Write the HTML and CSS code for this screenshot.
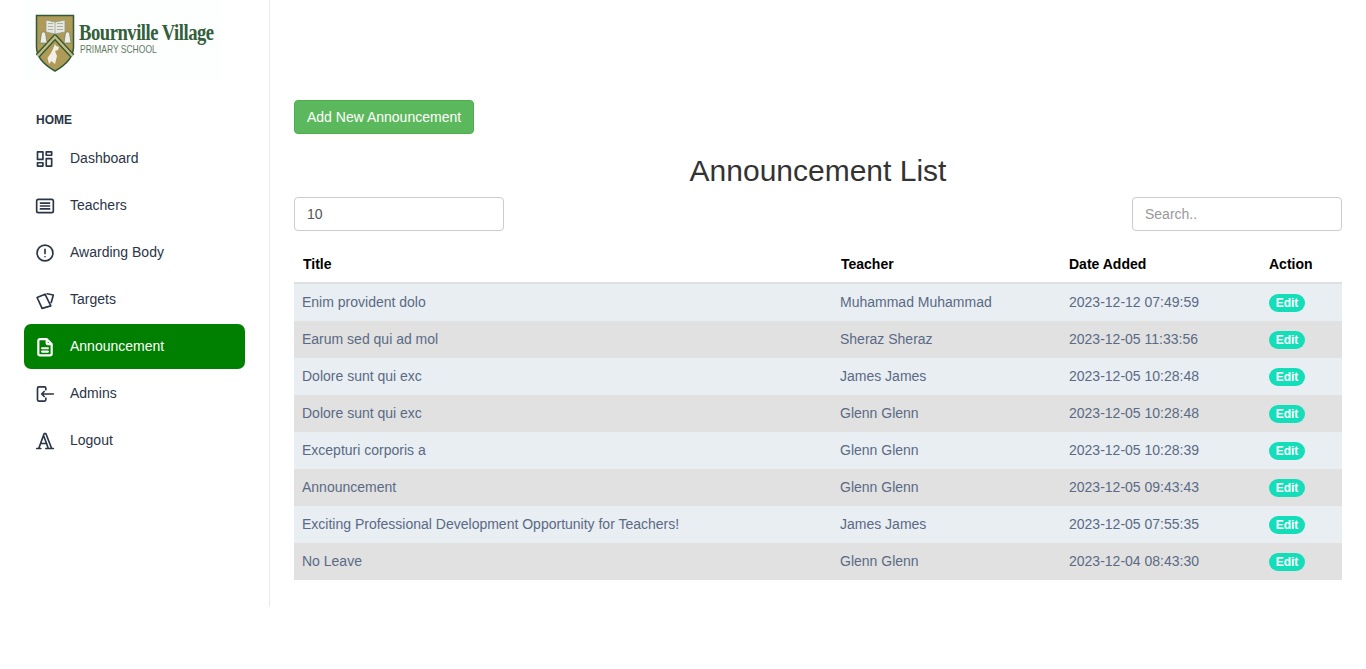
FILE: index.html
```html
<!DOCTYPE html>
<html lang="en">
<head>
<meta charset="utf-8">
<title>Announcement List</title>
<link rel="stylesheet" href="styles.css">
</head>
<body>
<div class="shell">
  <aside class="sidebar">
    <div class="logo">
      <svg class="crest" viewBox="0 0 40 58" width="40" height="58" aria-hidden="true">
        <path d="M1.500 1.500H38.500V33C38.500 45 29 52 20 57C11 52 1.500 45 1.500 33Z" fill="#b09a58" stroke="#2f5a35" stroke-width="1.500"/>
        <path d="M2.500 42L20 23L37.500 42" fill="none" stroke="#2f5a35" stroke-width="5"/>
        <path d="M2.500 42L20 23L37.500 42" fill="none" stroke="#c6ba80" stroke-width="2.400"/>
        <path d="M20 30L21 32L24 33L23 36L20 37L22 42L20 50L16.500 47L14 50L12.500 44L16 39L18 35Z" fill="#f1efe6"/>
        <path d="M11 6L20 8L30 6V18L20 20L11 18Z" fill="#e6e8e0" stroke="#8f9a85" stroke-width=".8"/>
        <path d="M20 8V20M13 9.500H18M13 12.500H18M13 15.500H18M22 9.500H28M22 12.500H28M22 15.500H28" stroke="#9aa593" stroke-width=".8" fill="none"/>
        <path d="M6.500 19C8 17.500 9.500 17.500 10.500 19L12 29H5Z" fill="#eceee6" stroke="#5d6f58" stroke-width=".6"/>
        <path d="M30.500 19C32 17.500 33.500 17.500 34.500 19L36 29H29Z" fill="#eceee6" stroke="#5d6f58" stroke-width=".6"/>
      </svg>
      <div class="logo-text">
        <div class="logo-name">Bournville Village</div>
        <div class="logo-sub">PRIMARY SCHOOL</div>
      </div>
    </div>
    <div class="nav-heading">HOME</div>
    <nav class="nav">
      <a class="nav-item">
        <svg class="icon" viewBox="0 0 24 24"><path d="M3 3.500h6.500v9H3zM3 16.500h6.500v4H3zM13.500 11.500H20v9h-6.500zM13.500 3.500H20v4h-6.500z"/></svg>
        <span>Dashboard</span>
      </a>
      <a class="nav-item">
        <svg class="icon" viewBox="0 0 24 24"><path d="M4 4h16a2 2 0 0 1 2 2v12a2 2 0 0 1-2 2H4a2 2 0 0 1-2-2V6a2 2 0 0 1 2-2M6.500 8.500h11M6.500 12h11M6.500 15.500h11"/></svg>
        <span>Teachers</span>
      </a>
      <a class="nav-item">
        <svg class="icon" viewBox="0 0 24 24"><path d="M12 2.500a9.500 9.500 0 1 0 0 19a9.500 9.500 0 0 0 0-19M12 7.500v5M12 16.500v.01"/></svg>
        <span>Awarding Body</span>
      </a>
      <a class="nav-item">
        <svg class="icon" viewBox="0 0 24 24"><path d="M2.500 9L12 5L19 19L8.500 22ZM14.500 4.500L22 6L19.500 15"/></svg>
        <span>Targets</span>
      </a>
      <a class="nav-item active">
        <svg class="icon icon-bold" viewBox="0 0 24 24"><path d="M14 2.500v5a1 1 0 0 0 1 1h5M18 22H6a2 2 0 0 1-2-2V4.500a2 2 0 0 1 2-2h8l6 6V20a2 2 0 0 1-2 2M8.500 13.500h7M8.500 17.500h7"/></svg>
        <span>Announcement</span>
      </a>
      <a class="nav-item">
        <svg class="icon" viewBox="0 0 24 24"><path d="M13 7V5a1.500 1.500 0 0 0-1.500-1.500h-7A1.500 1.500 0 0 0 3 5v14a1.500 1.500 0 0 0 1.500 1.500h7A1.500 1.500 0 0 0 13 19v-2M22 12H8M11 9l-3 3l3 3"/></svg>
        <span>Admins</span>
      </a>
      <a class="nav-item">
        <svg class="icon" viewBox="0 0 24 24"><path d="M2 21h5M13 21h9M4.500 21L11 3h2L20 21M7 15h7M10.500 6L16 21"/></svg>
        <span>Logout</span>
      </a>
    </nav>
  </aside>
  <main class="main">
    <a class="btn-add">Add New Announcement</a>
    <h1 class="title">Announcement List</h1>
    <div class="controls">
      <div class="field">10</div>
      <input class="field search" type="text" placeholder="Search..">
    </div>
    <table class="list">
      <thead>
        <tr><th class="c-title">Title</th><th class="c-teacher">Teacher</th><th class="c-date">Date Added</th><th class="c-action">Action</th></tr>
      </thead>
      <tbody>
        <tr><td>Enim provident dolo</td><td>Muhammad Muhammad</td><td>2023-12-12 07:49:59</td><td><span class="badge">Edit</span></td></tr>
        <tr><td>Earum sed qui ad mol</td><td>Sheraz Sheraz</td><td>2023-12-05 11:33:56</td><td><span class="badge">Edit</span></td></tr>
        <tr><td>Dolore sunt qui exc</td><td>James James</td><td>2023-12-05 10:28:48</td><td><span class="badge">Edit</span></td></tr>
        <tr><td>Dolore sunt qui exc</td><td>Glenn Glenn</td><td>2023-12-05 10:28:48</td><td><span class="badge">Edit</span></td></tr>
        <tr><td>Excepturi corporis a</td><td>Glenn Glenn</td><td>2023-12-05 10:28:39</td><td><span class="badge">Edit</span></td></tr>
        <tr><td>Announcement</td><td>Glenn Glenn</td><td>2023-12-05 09:43:43</td><td><span class="badge">Edit</span></td></tr>
        <tr><td>Exciting Professional Development Opportunity for Teachers!</td><td>James James</td><td>2023-12-05 07:55:35</td><td><span class="badge">Edit</span></td></tr>
        <tr><td>No Leave</td><td>Glenn Glenn</td><td>2023-12-04 08:43:30</td><td><span class="badge">Edit</span></td></tr>
      </tbody>
    </table>
  </main>
</div>
</body>
</html>
```

FILE: styles.css
```css
* { box-sizing: border-box; }
html, body { margin: 0; padding: 0; background: #fff; }
body { font-family: "Liberation Sans", Arial, sans-serif; font-size: 14px; color: #333; overflow: hidden; }

.shell { display: flex; align-items: flex-start; }

.sidebar { width: 270px; height: 607px; flex: none; border-right: 1px solid #e5eaef; padding: 0 24px; }
.logo { width: 198px; height: 80px; margin-bottom: 31px; padding: 14px 0 0 11px; display: flex; gap: 4px; background: #fdfefe; }
.crest { flex: none; }
.logo-text { padding-top: 6px; }
.logo-name { font-family: "Liberation Serif", serif; font-weight: 700; font-size: 23px; line-height: 26px; letter-spacing: -.6px; color: #33603b; white-space: nowrap; transform: scaleX(.81); transform-origin: left center; }
.logo-sub { font-size: 10.5px; line-height: 11px; margin-top: -2px; margin-left: 1px; color: #5d7a61; white-space: nowrap; transform: scaleX(.81); transform-origin: left center; }

.nav-heading { font-size: 12px; line-height: 18px; font-weight: 700; color: #2a3547; padding-left: 12px; margin-bottom: 7px; }
.nav { display: flex; flex-direction: column; gap: 2px; }
.nav-item { height: 45px; display: flex; align-items: center; gap: 15px; padding: 0 10px 2px 12px; border-radius: 7px; color: #2a3547; font-size: 14px; }
.icon { width: 20px; height: 20px; flex: none; margin: 2px 0 0 -1px; fill: none; stroke: currentColor; stroke-width: 2; stroke-linecap: round; stroke-linejoin: round; }
.icon-bold { stroke-width: 2.600; }
.nav-item.active { background: #008000; color: #fff; }

.main { flex: 1; min-width: 0; padding: 100px 24px 0 24px; }
.btn-add { display: inline-block; height: 34px; padding: 6px 12px; background: #5cb85c; border: 1px solid #4cae4c; border-radius: 4px; color: #fff; font-size: 14px; line-height: 20px; vertical-align: top; }
.title { margin: 20px 0 10px; font-size: 30px; line-height: 33px; font-weight: 400; text-align: center; color: #333; }
.controls { display: flex; justify-content: space-between; margin-bottom: 16px; }
.field { width: 210px; height: 34px; padding: 6px 12px; border: 1px solid #ccc; border-radius: 4px; background: #fff; font: 14px/20px "Liberation Sans", Arial, sans-serif; color: #555; outline: none; }
.search::placeholder { color: #999; opacity: 1; }

.list { width: 1048px; border-collapse: separate; border-spacing: 0; table-layout: fixed; font-size: 14px; }
.c-title { width: 538px; }
.c-teacher { width: 229px; }
.c-date { width: 199px; }
.c-action { width: 82px; }
.list th { height: 37px; padding: 0 8px 2px 9px; border-bottom: 2px solid #dcdfe3; text-align: left; font-weight: 700; color: #000; }
.list th.c-date { padding-left: 8px; }
.list td { height: 37px; padding: 0 8px 1px; color: #5a6a85; white-space: nowrap; }
.list tbody tr:nth-child(odd) { background: #e9eef3; }
.list tbody tr:nth-child(even) { background: #e1e1e1; }
.badge { display: inline-block; width: 36px; height: 18px; margin-top: 2px; margin-left: 1px; border-radius: 9px; background: #13deb9; color: #fff; font-size: 12px; font-weight: 700; line-height: 18px; text-align: center; vertical-align: middle; }
```
